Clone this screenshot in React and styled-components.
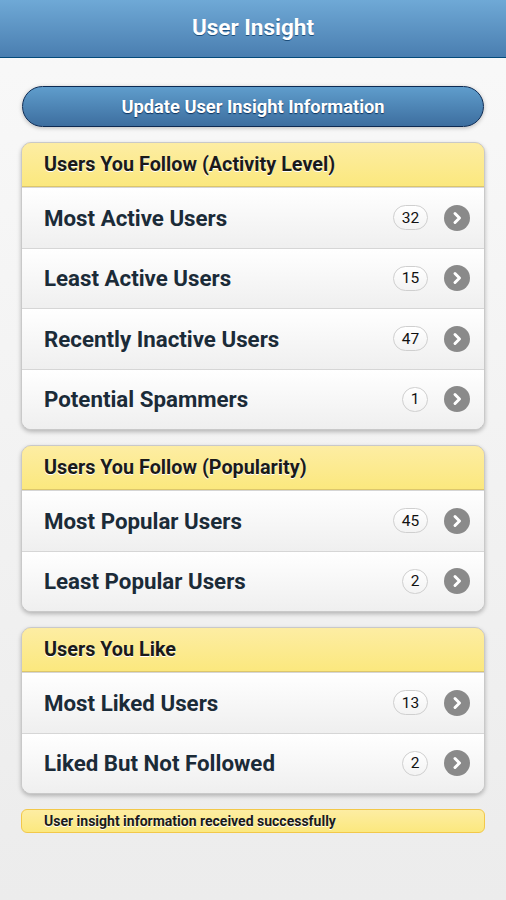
import React from "react";
import styled, { createGlobalStyle } from "styled-components";

const Global = createGlobalStyle`
  html, body { margin: 0; padding: 0; }
  body {
    font-family: Roboto, "Liberation Sans", sans-serif;
    background: #eeeeee;
    min-height: 900px;
  }
`;

const Page = styled.div`
  width: 506px;
  min-height: 900px;
  background: linear-gradient(#f9f9f9, #ececec);
`;

const Header = styled.header`
  height: 57px;
  border-bottom: 1px solid #044a7a;
  background: linear-gradient(#6fa9d6, #4a7eb0);
  display: flex;
  align-items: center;
  justify-content: center;
`;

const Title = styled.h1`
  margin: 0 0 3px;
  font-size: 22.5px;
  font-weight: 700;
  color: #fff;
  text-shadow: 0 1px 0 #1b4e7c;
`;

const Content = styled.main`
  padding: 28px 21px 0;
  display: flex;
  flex-direction: column;
`;

const UpdateButton = styled.button`
  height: 41px;
  margin: 0 1px 15px;
  border-radius: 21px;
  border: 1px solid #0d2a52;
  background: linear-gradient(#5f9dcc, #3d6e9f);
  color: #fff;
  font-family: Roboto, "Liberation Sans", sans-serif;
  font-size: 18.3px;
  font-weight: 700;
  text-shadow: 0 1px 1px #0f3560;
  box-shadow: 0 1px 4px rgba(0, 0, 0, 0.25);
  cursor: pointer;
`;

const ListCard = styled.section`
  border-radius: 10px;
  border: 1px solid #c9c9c9;
  box-shadow: 0 2px 4px rgba(0, 0, 0, 0.25);
  overflow: hidden;
  margin-bottom: 15px;
  background: #f5f5f5;
`;

const ListHeader = styled.div`
  height: 43px;
  border: 1px solid #f2c84a;
  border-bottom-color: #dcc66c;
  border-radius: 10px 10px 0 0;
  margin: -1px -1px 0;
  background: linear-gradient(#fdeda3, #fbe87e);
  display: flex;
  align-items: center;
  padding-left: 22px;
  font-size: 19.8px;
  font-weight: 700;
  color: #1a1a1a;
  text-shadow: 0 1px 0 #fff;
`;

const Row = styled.div`
  height: 59.5px;
  border-top: 1px solid #d6d6d6;
  background: linear-gradient(#ffffff, #efefef);
  display: flex;
  align-items: center;
  padding: 0 14px 0 22px;
  &:first-of-type { border-top: none; }
`;

const RowLabel = styled.span`
  flex: 1;
  font-size: 22.3px;
  font-weight: 700;
  color: #1b2b38;
`;

const Count = styled.span`
  min-width: ${p => (p.$wide ? "35px" : "26px")};
  height: 25px;
  box-sizing: border-box;
  padding: 0 6px;
  border-radius: 13px;
  border: 1px solid #cfcfcf;
  background: linear-gradient(#ffffff, #f3f3f3);
  display: flex;
  align-items: center;
  justify-content: center;
  font-size: 15.5px;
  font-weight: 400;
  color: #111;
  margin-right: 16px;
`;

const Arrow = styled.span`
  width: 26px;
  height: 26px;
  border-radius: 50%;
  background: #8a8a8a;
  display: flex;
  align-items: center;
  justify-content: center;
`;

const Status = styled.div`
  height: 22px;
  border: 1px solid #f2c84a;
  border-radius: 6px;
  background: linear-gradient(#fdeda3, #fbe87e);
  display: flex;
  align-items: center;
  padding-left: 22px;
  font-size: 14px;
  font-weight: 700;
  color: #1a1a1a;
  text-shadow: 0 1px 0 #fff;
`;

const Chevron = () => (
  <svg width="14" height="14" viewBox="0 0 14 14">
    <path d="M5 2.5 L9.5 7 L5 11.5" fill="none" stroke="#fff" strokeWidth="3" strokeLinecap="round" strokeLinejoin="round" />
  </svg>
);

const sections = [
  {
    title: "Users You Follow (Activity Level)",
    rows: [
      ["Most Active Users", 32],
      ["Least Active Users", 15],
      ["Recently Inactive Users", 47],
      ["Potential Spammers", 1],
    ],
  },
  {
    title: "Users You Follow (Popularity)",
    rows: [
      ["Most Popular Users", 45],
      ["Least Popular Users", 2],
    ],
  },
  {
    title: "Users You Like",
    rows: [
      ["Most Liked Users", 13],
      ["Liked But Not Followed", 2],
    ],
  },
];

export default function App() {
  return (
    <Page>
      <Global />
      <Header>
        <Title>User Insight</Title>
      </Header>
      <Content>
        <UpdateButton>Update User Insight Information</UpdateButton>
        {sections.map(s => (
          <ListCard key={s.title}>
            <ListHeader>{s.title}</ListHeader>
            {s.rows.map(([label, n]) => (
              <Row key={label}>
                <RowLabel>{label}</RowLabel>
                <Count $wide={n >= 10}>{n}</Count>
                <Arrow><Chevron /></Arrow>
              </Row>
            ))}
          </ListCard>
        ))}
        <Status>User insight information received successfully</Status>
      </Content>
    </Page>
  );
}
